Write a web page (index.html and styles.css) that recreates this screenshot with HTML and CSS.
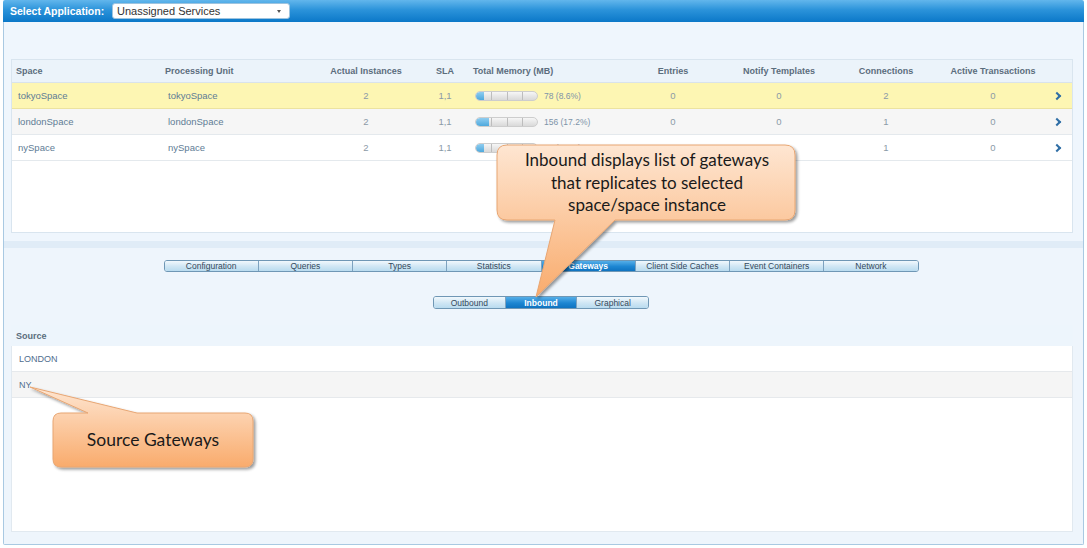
FILE: index.html
```html
<!DOCTYPE html>
<html>
<head>
<meta charset="utf-8">
<link rel="stylesheet" href="styles.css">
</head>
<body>
<div class="app">
  <div class="topbar">
    <span class="sel-label">Select Application:</span>
    <div class="dropdown"><span>Unassigned Services</span><span class="caret"></span></div>
  </div>
  <div class="frame">
    <div class="panel-top">
      <div class="table">
        <div class="row head">
          <div class="c l">Space</div><div class="c l">Processing Unit</div><div class="c m">Actual Instances</div><div class="c m">SLA</div><div class="c l mem-h">Total Memory (MB)</div><div class="c m">Entries</div><div class="c m">Notify Templates</div><div class="c m">Connections</div><div class="c m">Active Transactions</div><div class="c"></div>
        </div>
        <div class="row sel">
          <div class="c l b">tokyoSpace</div><div class="c l b pu">tokyoSpace</div><div class="c m n">2</div><div class="c m n">1,1</div>
          <div class="c l mem"><div class="bar"><div class="fill" style="width:8px"></div><i></i><i></i><i></i></div><span>78 (8.6%)</span></div>
          <div class="c m n">0</div><div class="c m n">0</div><div class="c m n">2</div><div class="c m n">0</div><div class="c m"><span class="chev"></span></div>
        </div>
        <div class="row alt">
          <div class="c l b">londonSpace</div><div class="c l b pu">londonSpace</div><div class="c m n">2</div><div class="c m n">1,1</div>
          <div class="c l mem"><div class="bar"><div class="fill" style="width:13px"></div><i></i><i></i><i></i></div><span>156 (17.2%)</span></div>
          <div class="c m n">0</div><div class="c m n">0</div><div class="c m n">1</div><div class="c m n">0</div><div class="c m"><span class="chev"></span></div>
        </div>
        <div class="row">
          <div class="c l b">nySpace</div><div class="c l b pu">nySpace</div><div class="c m n">2</div><div class="c m n">1,1</div>
          <div class="c l mem"><div class="bar"><div class="fill" style="width:8px"></div><i></i><i></i><i></i></div><span>78 (8.6%)</span></div>
          <div class="c m n">0</div><div class="c m n">0</div><div class="c m n">1</div><div class="c m n">0</div><div class="c m"><span class="chev"></span></div>
        </div>
      </div>
    </div>
    <div class="band"></div>
    <div class="panel-bottom">
      <div class="tabs">
        <div class="tab">Configuration</div><div class="tab">Queries</div><div class="tab">Types</div><div class="tab">Statistics</div><div class="tab active">Gateways</div><div class="tab">Client Side Caches</div><div class="tab">Event Containers</div><div class="tab">Network</div>
      </div>
      <div class="tabs sub">
        <div class="tab">Outbound</div><div class="tab active">Inbound</div><div class="tab">Graphical</div>
      </div>
      <div class="src-head">Source</div>
      <div class="src-table">
        <div class="src-row">LONDON</div>
        <div class="src-row alt">NY</div>
      </div>
    </div>
  </div>
  <svg class="overlay" width="1087" height="548" viewBox="0 0 1087 548">
    <defs>
      <linearGradient id="og" x1="0" y1="0" x2="0" y2="1">
        <stop offset="0" stop-color="#fee6d2"/>
        <stop offset="1" stop-color="#f9ab6c"/>
      </linearGradient>
      <filter id="sh" x="-10%" y="-10%" width="130%" height="140%">
        <feGaussianBlur in="SourceAlpha" stdDeviation="1.6"/>
        <feOffset dx="1.5" dy="2" result="o"/>
        <feComponentTransfer><feFuncA type="linear" slope="0.4"/></feComponentTransfer>
        <feMerge><feMergeNode/><feMergeNode in="SourceGraphic"/></feMerge>
      </filter>
    </defs>
    <path filter="url(#sh)" fill="url(#og)" stroke="#e8a673" stroke-width="1" d="M507,145 H785 Q795,145 795,155 V210 Q795,220 785,220 H615 L536,297 L555,220 H507 Q497,220 497,210 V155 Q497,145 507,145 Z"/>
    <text class="ct" x="647" y="166" text-anchor="middle">Inbound displays list of gateways</text>
    <text class="ct" x="647" y="189" text-anchor="middle">that replicates to selected</text>
    <text class="ct" x="647" y="211" text-anchor="middle">space/space instance</text>
    <path filter="url(#sh)" fill="url(#og)" stroke="#e8a673" stroke-width="1" d="M61,413 H88 L30,387 L137,413 H245 Q253,413 253,421 V459 Q253,467 245,467 H61 Q53,467 53,459 V421 Q53,413 61,413 Z"/>
    <text class="ct big" x="153" y="446" text-anchor="middle">Source Gateways</text>
  </svg>
</div>
</body>
</html>
```
FILE: styles.css
```css
html, body { margin: 0; padding: 0; background: #ffffff; }
.app { position: relative; width: 1087px; height: 548px; font-family: "Liberation Sans", Arial, sans-serif; }
.topbar {
  height: 22px; width: 1081px; margin-left: 3px;
  background: linear-gradient(#62b6ec, #2b93da 45%, #0b78c8);
  display: flex; align-items: center; box-sizing: border-box; padding-left: 7px;
  border-radius: 2px 2px 0 0;
}
.sel-label { color: #fff; font-weight: bold; font-size: 10.5px; width: 102px; }
.dropdown {
  width: 178px; height: 16px; box-sizing: border-box; background: #fff; border: 1px solid #9ec4df;
  border-radius: 3px; display: flex; align-items: center; justify-content: space-between;
  padding: 0 8px 0 4px; font-size: 11px; color: #333;
}
.caret { width: 0; height: 0; border-left: 2.5px solid transparent; border-right: 2.5px solid transparent; border-top: 3px solid #555; }
.frame {
  width: 1081px; margin-left: 3px; box-sizing: border-box; border: 1px solid #a9c9e2; border-top: none;
  background: #edf5fc; border-radius: 0 0 2px 2px;
}
.panel-top { background: #eff6fd; padding: 37px 10px 8px 7px; }
.table { height: 174px; background: #fff; border: 1px solid #d9e5ef; box-sizing: border-box; }
.row { display: grid; grid-template-columns: 149px 150px 110px 48px 152px 104px 108px 106px 108px 24px; height: 26px; align-items: center; border-bottom: 1px solid #e4e9ed; box-sizing: border-box; }
.row.head { height: 23px; background: #ebf3fa; border-bottom: 1px solid #d9e3eb; }
.row.sel { background: #fdf6b3; border-bottom-color: #ece3a0; }
.row.alt { background: #f6f6f6; }
.c { font-size: 9.5px; white-space: nowrap; }
.head .c { font-weight: bold; font-size: 9px; color: #5b6d7d; }
.l { padding-left: 4px; }
.b { color: #607c95; padding-left: 6px; }
.pu { padding-left: 7px; }
.m { text-align: center; }
.n { color: #8b9aa7; }
.mem-h { padding-left: 4px; }
.mem { display: flex; align-items: center; padding-left: 6px; color: #7d93a8; font-size: 8.5px; }
.mem span { margin-left: 6px; }
.bar {
  position: relative; width: 63px; height: 10px; box-sizing: border-box; border-radius: 5px; overflow: hidden;
  background: linear-gradient(#f6f6f6, #d9d9d9); border: 1px solid #cdcdcd; flex: none;
}
.bar .fill { position: absolute; left: 0; top: 0; bottom: 0; background: linear-gradient(#8fcdf0, #4ea9dd); border-radius: 4px 0 0 4px; }
.bar i { position: absolute; top: 0; bottom: 0; width: 1px; background: #bdbdbd; }
.bar i:nth-of-type(1) { left: 25%; }
.bar i:nth-of-type(2) { left: 50%; }
.bar i:nth-of-type(3) { left: 75%; }
.chev { display: inline-block; width: 4px; height: 4px; border-right: 2px solid #2f6ea5; border-bottom: 2px solid #2f6ea5; transform: rotate(-45deg); margin-left: -4px; }
.band { height: 7px; background: #e0ecf7; }
.panel-bottom { background: #eef5fc; padding: 12px 10px 12px 7px; }
.tabs { display: flex; width: 755px; margin: 0 auto; height: 12px; border: 1px solid #6f97b5; border-radius: 3px; box-sizing: border-box; overflow: hidden; transform: translateX(-1px); }
.tab {
  flex: 1; display: flex; align-items: center; justify-content: center; font-size: 8.5px; color: #34495c;
  background: linear-gradient(#f1f8fd, #cfe6f4 55%, #b9dbef); border-left: 1px solid #7da2bf;
}
.tab:first-child { border-left: none; }
.tab.active { background: linear-gradient(#55aee8, #1d86d2 55%, #0f73c0); color: #fff; font-weight: bold; }
.tabs.sub { width: 216px; height: 13px; margin-top: 24px; }
.src-head { height: 21px; margin-top: 16px; display: flex; align-items: center; padding-left: 5px; font-weight: bold; font-size: 9px; color: #5b6d7d; background: #edf5fc; }
.src-table { height: 186px; background: #fff; border: 1px solid #e1e9f0; border-top: none; box-sizing: border-box; }
.src-row { height: 26px; display: flex; align-items: center; padding-left: 7px; font-size: 9px; color: #4f6e8e; border-bottom: 1px solid #e6e9ec; box-sizing: border-box; }
.src-row.alt { background: #f5f5f5; }
.overlay { position: absolute; left: 0; top: 0; pointer-events: none; }
.ct { font-family: Lato, "Open Sans", sans-serif; font-size: 17px; fill: #1a1a1a; }
.ct.big { font-size: 17.5px; }
```
